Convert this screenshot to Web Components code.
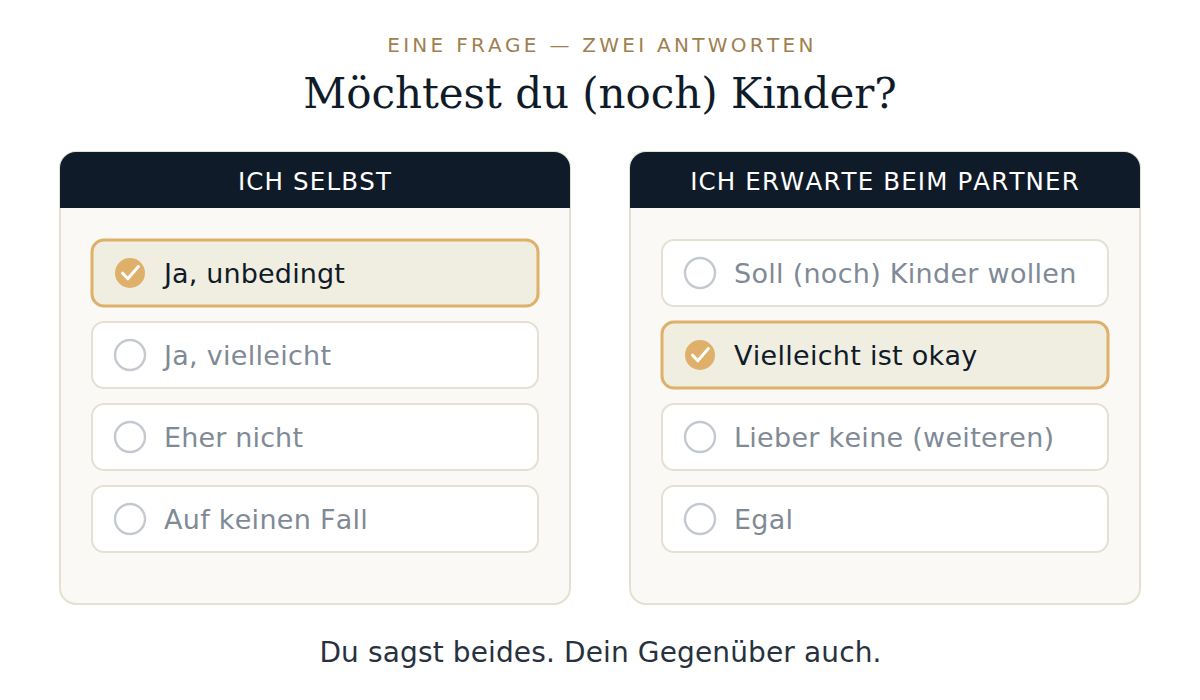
<!DOCTYPE html>
<html lang="de">
<head>
<meta charset="utf-8">
<title>Möchtest du (noch) Kinder?</title>
<style>
	body {
		margin: 0;
		background: #fff;
		font-family: "DejaVu Sans", Verdana, sans-serif;
		font-kerning: none;
	}
</style>
</head>
<body>
<question-page>
	<span slot="eyebrow">EINE FRAGE — ZWEI ANTWORTEN</span>
	<span slot="title">Möchtest du (noch) Kinder?</span>
	<answer-card label="ICH SELBST">
		<answer-option style="--tracking: .15px" selected>Ja, unbedingt</answer-option>
		<answer-option>Ja, vielleicht</answer-option>
		<answer-option style="--tracking: .15px">Eher nicht</answer-option>
		<answer-option>Auf keinen Fall</answer-option>
	</answer-card>
	<answer-card label="ICH ERWARTE BEIM PARTNER">
		<answer-option>Soll (noch) Kinder wollen</answer-option>
		<answer-option selected>Vielleicht ist okay</answer-option>
		<answer-option>Lieber keine (weiteren)</answer-option>
		<answer-option>Egal</answer-option>
	</answer-card>
	<span slot="footer">Du sagst beides. Dein Gegenüber auch.</span>
</question-page>

<script>
/**
 * QUESTION-PAGE
 * slots: "eyebrow", "title", "footer", default (the answer cards)
 */
class QUESTION_PAGE extends HTMLElement {
	constructor() {
		super();
		this.attachShadow({ mode: 'open' });
		this.shadowRoot.innerHTML = `
			<style>
				:host {
					box-sizing: border-box;
					display: flex;
					flex-direction: column;
					width: 1200px;
					height: 700px;
					padding: 33px 60px 0;
					text-align: center;
					white-space: nowrap;
				}
				.eyebrow {
					padding-left: 4px;
					font-size: 20px;
					line-height: 24px;
					letter-spacing: 3.28px;
					color: #a08050;
				}
				h1 {
					margin: 12px 0 0;
					font: 400 42px/50px "DejaVu Serif", Georgia, serif;
					font-kerning: none;
					letter-spacing: -.06px;
					color: #0f1b28;
				}
				main {
					display: grid;
					grid-template-columns: 1fr 1fr;
					gap: 60px;
					margin-top: 33px;
				}
				footer {
					padding-left: 1px;
					margin-top: 32px;
					font-size: 28px;
					line-height: 34px;
					letter-spacing: .13px;
					color: #28323e;
				}
			</style>
			<div class="eyebrow"><slot name="eyebrow"></slot></div>
			<h1><slot name="title"></slot></h1>
			<main><slot></slot></main>
			<footer><slot name="footer"></slot></footer>
		`;
	}
}

/**
 * ANSWER-CARD
 * @attribute "label"
 */
class ANSWER_CARD extends HTMLElement {
	constructor() {
		super();
		this.attachShadow({ mode: 'open' });
		this.shadowRoot.innerHTML = `
			<style>
				:host {
					display: grid;
					grid-template: 100% / 100%;
					height: 452px;
				}
				.frame,
				.content {
					grid-area: 1 / 1;
				}
				.frame {
					display: block;
					width: 100%;
					height: 100%;
					overflow: visible;
				}
				.frame rect {
					fill: #faf9f5;
					stroke: #e4e0d2;
					stroke-width: 2;
				}
				.content {
					position: relative;
					display: flex;
					flex-direction: column;
				}
				header {
					height: 56px;
					border-radius: 16px 16px 0 0;
					background: #0f1b28;
					color: #fff;
					font-size: 24.5px;
					line-height: 60px;
					letter-spacing: 1.15px;
					text-align: center;
				}
				.options {
					display: flex;
					flex-direction: column;
					gap: 16px;
					padding: 32px;
				}
			</style>
			<svg class="frame"><rect width="100%" height="100%" rx="16"/></svg>
			<div class="content">
				<header></header>
				<div class="options"><slot></slot></div>
			</div>
		`;
	}
	connectedCallback() {
		this.shadowRoot.querySelector('header').textContent = this.getAttribute('label');
	}
}

/**
 * ANSWER-OPTION
 * @attribute "selected"
 * @cssprop   --tracking
 */
class ANSWER_OPTION extends HTMLElement {
	constructor() {
		super();
		this.attachShadow({ mode: 'open' });
		this.shadowRoot.innerHTML = `
			<style>
				:host {
					display: grid;
					grid-template: 100% / 100%;
					height: 66px;
					color: #7f8a96;
				}
				:host([selected]) {
					color: #0f1b28;
				}
				.frame,
				.row {
					grid-area: 1 / 1;
				}
				.frame {
					display: block;
					width: 100%;
					height: 100%;
					overflow: visible;
				}
				.frame rect {
					fill: #fff;
					stroke: #e4e0d2;
					stroke-width: 2;
				}
				:host([selected]) .frame rect {
					fill: #f0ede1;
					stroke: #deb06a;
					stroke-width: 3;
				}
				.row {
					position: relative;
					display: flex;
					align-items: center;
					gap: 18px;
					padding-left: 22px;
				}
				.label {
					padding-top: 2px;
					font-size: 27px;
					line-height: 32px;
					letter-spacing: var(--tracking, .28px);
					text-align: left;
				}
				.mark {
					flex: none;
					width: 32px;
					height: 32px;
					overflow: visible;
				}
				.ring {
					fill: #fff;
					stroke: #c4c9d1;
					stroke-width: 2.4;
				}
				.dot {
					fill: #deb06a;
				}
				.check {
					fill: none;
					stroke: #fff;
					stroke-width: 3;
					stroke-linecap: round;
					stroke-linejoin: round;
				}
				.dot, .check,
				:host([selected]) .ring {
					display: none;
				}
				:host([selected]) .dot,
				:host([selected]) .check {
					display: inline;
				}
			</style>
			<svg class="frame"><rect width="100%" height="100%" rx="12"/></svg>
			<div class="row">
				<svg class="mark" viewBox="0 0 32 32">
					<circle class="ring" cx="16" cy="16" r="15"/>
					<circle class="dot" cx="16" cy="16" r="15"/>
					<path class="check" d="M8.6 16.2L13.8 21.8 24.4 9.6"/>
				</svg>
				<span class="label"><slot></slot></span>
			</div>
		`;
	}
}

customElements.define('question-page', QUESTION_PAGE);
customElements.define('answer-card', ANSWER_CARD);
customElements.define('answer-option', ANSWER_OPTION);
</script>
</body>
</html>
